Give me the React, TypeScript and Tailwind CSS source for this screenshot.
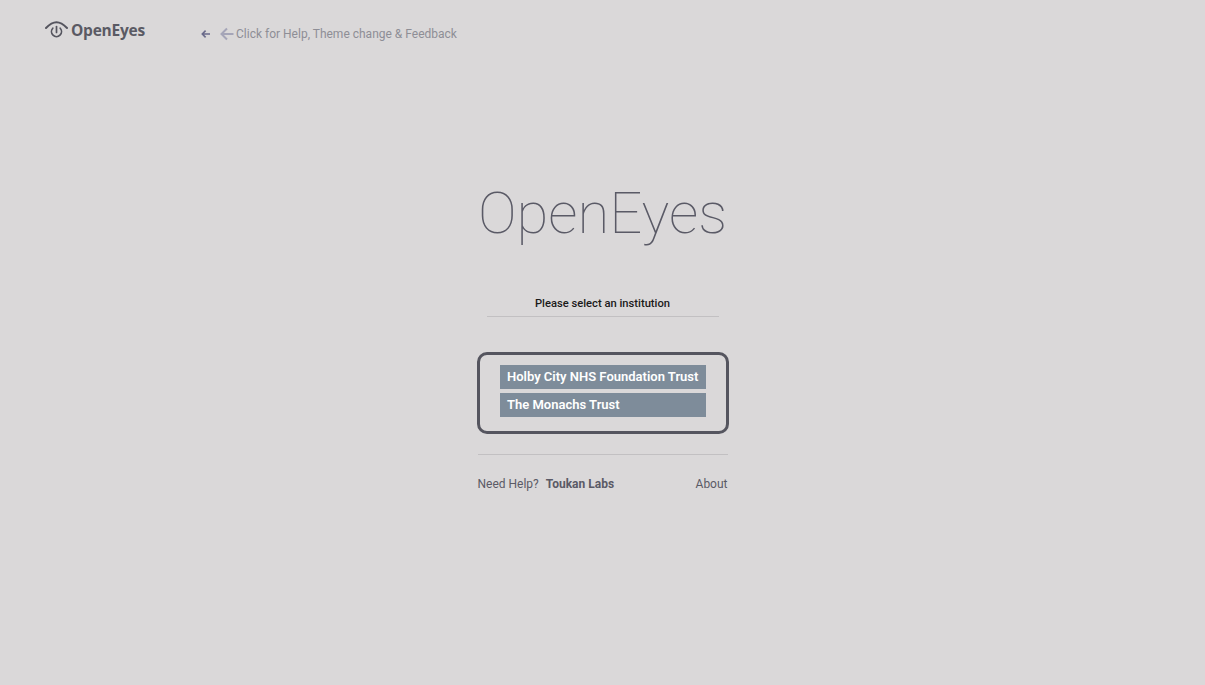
export default function App() {
  return (
    <div className="h-[685px] overflow-hidden bg-[#dad8d9] font-['Roboto',sans-serif] text-[#5a5a66]">
      <header className="flex h-[64px] items-start">
        <div className="ml-[45px] mt-[19px] flex w-[156px] items-center">
          <svg width="24" height="20" viewBox="0 0 24 20" fill="none" stroke="#55555f" className="shrink-0">
            <path d="M1 8C5 3.8 8.5 2.2 11.5 2.2S18 3.8 22 8" strokeWidth="2" strokeLinecap="round" />
            <path d="M7.8 8.2a5 5 0 1 0 7.4 0" strokeWidth="1.7" strokeLinecap="round" />
            <path d="M11.5 6.5v6" strokeWidth="1.7" strokeLinecap="round" />
          </svg>
          <span className="ml-[2px] font-['Open_Sans',sans-serif] text-[15.5px] font-bold leading-[22px] tracking-[-0.25px] text-[#5a5a64]">OpenEyes</span>
        </div>
        <div className="mt-[26px] flex items-center">
          <svg width="10" height="10" viewBox="0 0 10 10" fill="none" stroke="#6a6a8a" strokeWidth="1.6" className="shrink-0">
            <path d="M9 5H1.5M4.6 1.6 1.3 5l3.3 3.4" />
          </svg>
          <svg width="14" height="14" viewBox="0 0 14 14" fill="none" stroke="#a5a5b8" strokeWidth="2" className="ml-[9px] shrink-0">
            <path d="M13.5 7H2M7 1.5 1.5 7 7 12.5" />
          </svg>
          <span className="ml-[2px] text-[12px] leading-[16px] text-[#8e8e96]">Click for Help, Theme change &amp; Feedback</span>
        </div>
      </header>
      <main className="flex flex-col items-center">
        <h1 className="mt-[112px] text-[58px] font-thin leading-[75px] text-[#5a5a66]">OpenEyes</h1>
        <p className="mt-[45px] w-[232px] border-b border-[#c2c0c2] pb-[4px] text-center text-[11.2px] font-medium leading-[16px] text-[#1a1a1a]">Please select an institution</p>
        <div className="mt-[35px] flex h-[82px] w-[252px] flex-col items-center gap-1 rounded-[10px] border-[3px] border-[#55555f] pt-[10px]">
          <div className="h-6 w-[206px] whitespace-nowrap bg-[#7e8c9a] pl-[7.5px] text-[13px] font-semibold leading-6 text-white">Holby City NHS Foundation Trust</div>
          <div className="h-6 w-[206px] whitespace-nowrap bg-[#7e8c9a] pl-[7.5px] text-[13px] font-semibold leading-6 text-white">The Monachs Trust</div>
        </div>
        <hr className="mt-5 w-[250px] border-t border-[#c2c0c2]" />
        <footer className="mt-[21px] flex w-[250px] justify-between text-xs leading-4 text-[#5a5a66]">
          <span>Need Help? <strong className="ml-1 font-bold">Toukan Labs</strong></span>
          <span>About</span>
        </footer>
      </main>
    </div>
  );
}
